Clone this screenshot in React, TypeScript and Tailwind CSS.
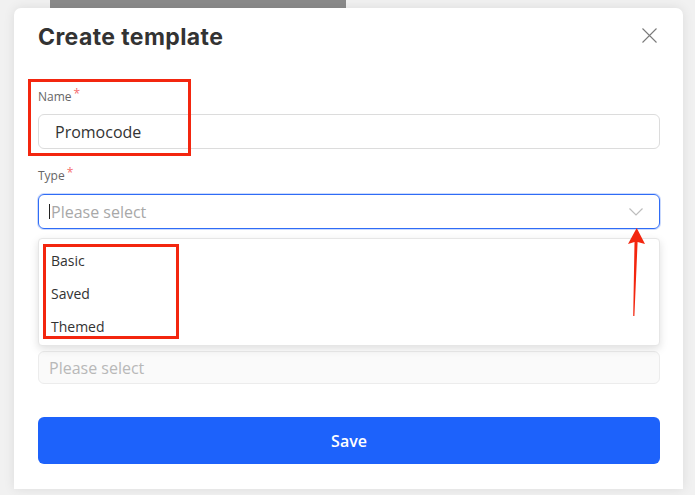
import { useState } from 'react';

const fieldFont = { fontFamily: '"Open Sans", "Noto Sans", sans-serif' };

const Label = ({ text }: { text: string }) => (
  <div className="flex items-start h-[18px] text-[12px] leading-[18px] text-[#666]">
    <span>{text}</span>
    <span className="ml-[2px] text-[12px] leading-[12px] text-[#f56c6c]">*</span>
  </div>
);

export default function App() {
  const [name, setName] = useState('Promocode');
  const options = ['Basic', 'Saved', 'Themed'];

  return (
    <div
      className="w-[695px] h-[495px] bg-[#f1f1f1] overflow-hidden flex flex-col"
      style={fieldFont}
    >
      {/* Page content peeking behind the modal */}
      <div className="h-[8px] ml-[50px] w-[296px] bg-[#8b8b8b] shrink-0" />

      {/* Modal */}
      <div className="relative ml-[14px] w-[669px] h-[481px] shrink-0 bg-white rounded-t-[7px] pl-[24px] pr-[23px] pt-[14px] shadow-[0_0_12px_rgba(0,0,0,0.09)]">
        {/* Header */}
        <div className="flex justify-between items-start">
          <h2
            className="h-[30px] text-[23px] leading-[30px] font-bold text-[#333] tracking-[0.4px]"
            style={{ fontFamily: 'Inter, "Noto Sans", sans-serif' }}
          >
            Create template
          </h2>
          <button className="mt-[6px] mr-[3px] w-[15px] h-[15px] text-[#7a7a7a]">
            <svg viewBox="0 0 15 15" className="w-[15px] h-[15px]" fill="none" stroke="currentColor" strokeWidth={1.1}>
              <path d="M0.5 0.5L14.5 14.5M14.5 0.5L0.5 14.5" />
            </svg>
          </button>
        </div>

        {/* Name */}
        <div className="mt-[36px]">
          <Label text="Name" />
          <input
            value={name}
            onChange={(e) => setName(e.target.value)}
            className="mt-[8px] w-full h-[35px] rounded-[6px] border border-[#dcdcdc] pl-[16px] text-[16px] text-[#333] outline-none"
          />
        </div>

        {/* Type */}
        <div className="mt-[18px]">
          <Label text="Type" />
          <div className="mt-[9px] w-full h-[35px] rounded-[6px] border border-[#2f6cf6] ring-1 ring-[#2f6cf6]/25 flex items-center pl-[10px] pr-[16px]">
            <span className="w-px h-[15px] bg-[#222]" />
            <span className="ml-[1px] text-[16px] text-[#a8a8a8] flex-1">Please select</span>
            <svg viewBox="0 0 14 8" className="w-[14px] h-[8px]" fill="none" stroke="#bdbdbd" strokeWidth={1.2}>
              <path d="M0.5 0.5L7 7L13.5 0.5" />
            </svg>
          </div>
        </div>

        {/* Fields hidden under the open dropdown */}
        <div className="mt-[18px] invisible">
          <Label text="Category" />
          <div className="mt-[8px] w-full h-[35px] rounded-[6px] border border-[#dcdcdc]" />
        </div>
        <div className="mt-[18px]">
          <div className="invisible">
            <Label text="Theme" />
          </div>
          <div className="mt-[7px] w-full h-[33px] rounded-[6px] border border-[#ececec] bg-[#fafafa] flex items-center pl-[10px] text-[16px] text-[#b8b8b8]">
            Please select
          </div>
        </div>

        {/* Save */}
        <button className="mt-[33px] w-full h-[47px] rounded-[6px] bg-[#1d62fb] text-white text-[16px] font-semibold">
          Save
        </button>

        {/* Dropdown */}
        <div className="absolute left-[24px] top-[230px] w-[622px] h-[108px] bg-white rounded-[4px] border border-[#e6e6e6] shadow-[0_3px_8px_rgba(0,0,0,0.13)] pt-[5px]">
          {options.map((o) => (
            <div key={o} className="h-[33px] leading-[33px] pl-[12px] text-[14px] text-[#333]">
              {o}
            </div>
          ))}
        </div>

        {/* Annotations */}
        <div className="absolute left-[14px] top-[71px] w-[163px] h-[77px] border-[3px] border-[#f3260f]" />
        <div className="absolute left-[29px] top-[236px] w-[136px] h-[95px] border-[3px] border-[#f3260f]" />
        <svg className="absolute left-[610px] top-[219px] w-[24px] h-[92px]" viewBox="0 0 24 92" fill="#f3260f">
          <path d="M12.7 1L4 17L10.5 15L9.2 89L10.4 89L13.6 15L21 17Z" />
        </svg>
      </div>
    </div>
  );
}
